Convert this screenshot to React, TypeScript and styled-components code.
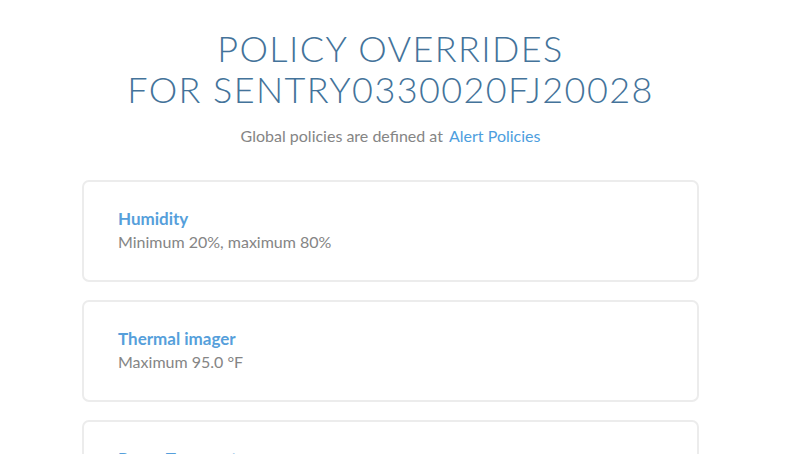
import styled, { createGlobalStyle } from "styled-components";

const GlobalStyle = createGlobalStyle`
  body {
    margin: 0;
    background: #fff;
    font-family: "Lato", "Noto Sans", sans-serif;
    overflow: hidden;
  }
`;

type Policy = {
  name: string;
  summary: string;
};

const policies: Policy[] = [
  { name: "Humidity", summary: "Minimum 20%, maximum 80%" },
  { name: "Thermal imager", summary: "Maximum 95.0 °F" },
  { name: "Room Temperature", summary: "Maximum 80.0 °F" },
];

export default function App() {
  return (
    <Page>
      <GlobalStyle />
      <Title>
        Policy overrides
        <br />
        for SENTRY0330020FJ20028
      </Title>
      <Subtitle>
        Global policies are defined at <Link href="#">Alert Policies</Link>
      </Subtitle>
      <List>
        {policies.map((policy) => (
          <Card key={policy.name}>
            <CardTitle>{policy.name}</CardTitle>
            <CardText>{policy.summary}</CardText>
          </Card>
        ))}
      </List>
    </Page>
  );
}

const Page = styled.main`
  display: flex;
  flex-direction: column;
  align-items: center;
  padding: 28px 19px 0 0;
  height: 454px;
  box-sizing: border-box;
  overflow: hidden;
`;

const Title = styled.h1`
  margin: 0;
  font-family: "Lato", sans-serif;
  font-weight: 300;
  font-size: 36px;
  line-height: 41px;
  letter-spacing: 1.4px;
  text-transform: uppercase;
  text-align: center;
  color: #44739a;
`;

const Subtitle = styled.p`
  margin: 14px 0 0;
  font-size: 16px;
  line-height: 24px;
  color: #858585;
`;

const Link = styled.a`
  margin-left: 2px;
  color: #4d9ede;
  text-decoration: none;
`;

const List = styled.div`
  display: flex;
  flex-direction: column;
  gap: 18px;
  width: 617px;
  margin-top: 32px;
`;

const Card = styled.div`
  flex-shrink: 0;
  box-sizing: border-box;
  height: 102px;
  padding: 26px 34px;
  border: 2px solid #ececec;
  border-radius: 7px;
  background: #fff;
`;

const CardTitle = styled.h3`
  margin: 0;
  font-size: 17px;
  line-height: 22px;
  font-weight: 700;
  color: #569fdb;
`;

const CardText = styled.p`
  margin: 1px 0 0;
  font-size: 16px;
  line-height: 22px;
  color: #858585;
`;
